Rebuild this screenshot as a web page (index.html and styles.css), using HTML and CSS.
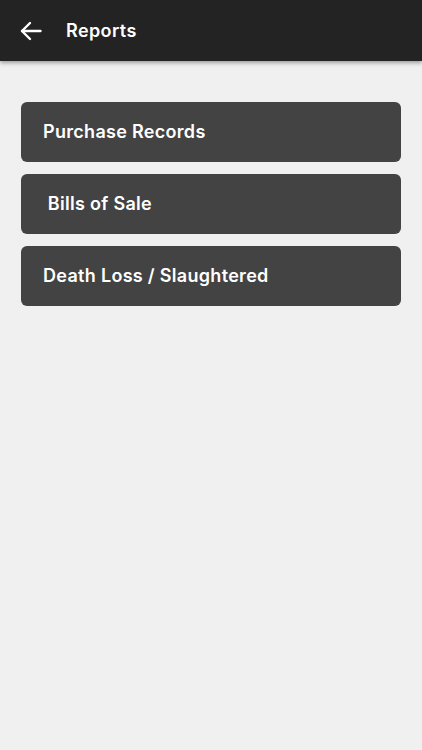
FILE: index.html
```html
<!DOCTYPE html>
<html lang="en">
<head>
    <meta charset="UTF-8">
    <meta name="viewport" content="width=device-width, initial-scale=1.0">
    <title>Reports</title>
    <link rel="stylesheet" href="styles.css">
</head>
<body>
    <header class="topbar">
        <button class="back" aria-label="Back">
            <svg width="22" height="20" viewBox="0 0 22 20" fill="none" stroke="#fff" stroke-width="2.4" stroke-linecap="round" stroke-linejoin="round">
                <path d="M20.5 10H2"/>
                <path d="M10 2L2 10l8 8"/>
            </svg>
        </button>
        <h1>Reports</h1>
    </header>

    <main class="list">
        <a class="report">Purchase Records</a>
        <a class="report">&nbsp;Bills of Sale</a>
        <a class="report">Death Loss / Slaughtered</a>
    </main>
</body>
</html>
```

FILE: styles.css
```css
body {
    margin: 0;
    background-color: #f0f0f0;
    font-family: Inter, "Noto Sans", sans-serif;
    color: #fff;
}
.topbar {
    height: 61px;
    background-color: #232323;
    display: flex;
    align-items: center;
    padding-left: 20px;
    box-shadow: 0 2px 4px rgba(0,0,0,0.35);
}
.back {
    background: none;
    border: none;
    padding: 0;
    width: 22px;
    height: 20px;
    display: flex;
    cursor: pointer;
}
.topbar h1 {
    margin: 0 0 0 24px;
    font-size: 18px;
    font-weight: 600;
    letter-spacing: 0.4px;
}
.list {
    display: flex;
    flex-direction: column;
    gap: 12px;
    padding: 41px 21px 0 21px;
}
.report {
    height: 60px;
    box-sizing: border-box;
    padding-bottom: 2px;
    display: flex;
    align-items: center;
    padding-left: 22px;
    background-color: #434343;
    border-radius: 6px;
    font-size: 18px;
    font-weight: 600;
    letter-spacing: 0.3px;
    cursor: pointer;
}
```
